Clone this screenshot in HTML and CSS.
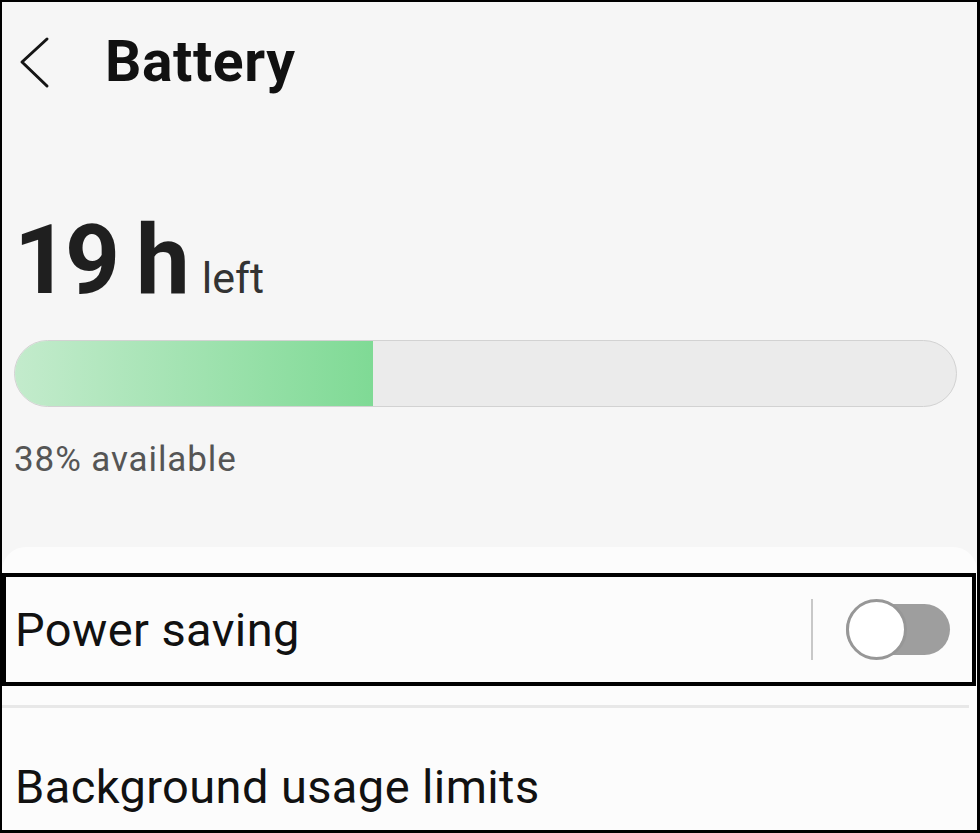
FILE: index.html
```html
<!DOCTYPE html>
<html lang="en">
<head>
    <meta charset="UTF-8" />
    <meta name="viewport" content="width=device-width, initial-scale=1.0" />
    <title>Battery</title>
    <link rel="stylesheet" href="styles.css">
</head>
<body>
    <div class="pantalla">
        <header class="cabecera">
            <svg class="volver" width="32" height="54" viewBox="0 0 32 54">
                <polyline points="28,3 3,26 28,50" fill="none" stroke="#151515" stroke-width="3" stroke-linecap="round" stroke-linejoin="round" />
            </svg>
            <h1>Battery</h1>
        </header>

        <section class="resumen">
            <p class="tiempo"><span class="horas">19 h</span><span class="resto">left</span></p>
            <div class="barra">
                <div class="barra-nivel" style="width: 38%"></div>
            </div>
            <p class="disponible">38% available</p>
        </section>

        <section class="tarjeta">
            <div class="fila fila-marcada">
                <span class="fila-texto">Power saving</span>
                <div class="fila-control">
                    <span class="separador"></span>
                    <span class="interruptor"><span class="perilla"></span></span>
                </div>
            </div>
            <hr class="linea">
            <div class="fila fila-ultima">
                <span class="fila-texto">Background usage limits</span>
            </div>
        </section>
    </div>
</body>
</html>
```

FILE: styles.css
```css
* {
    margin: 0;
    padding: 0;
    box-sizing: border-box;
}

body {
    font-family: Roboto, 'Noto Sans', sans-serif;
    background: #ffffff;
}

.pantalla {
    width: 980px;
    height: 833px;
    border-style: solid;
    border-color: #000;
    border-width: 2px 3px 3px 2px;
    background-color: #f6f6f6;
    overflow: hidden;
    display: flex;
    flex-direction: column;
}

.cabecera {
    height: 122px;
    display: flex;
    align-items: center;
    padding-left: 17px;
}

.volver {
    display: block;
}

.cabecera h1 {
    margin-left: 54px;
    margin-top: -3px;
    font-size: 57px;
    font-weight: 700;
    letter-spacing: 0.6px;
    color: #111;
    line-height: 1;
}

.resumen {
    padding: 0 20px 0 12px;
}

.tiempo {
    margin-top: 88px;
    line-height: 1;
    color: #1f1f1f;
    white-space: nowrap;
}

.horas {
    font-size: 96px;
    font-weight: 700;
    letter-spacing: -4px;
}

.resto {
    font-size: 43px;
    color: #333;
    margin-left: 16px;
}

.barra {
    margin-top: 32px;
    height: 67px;
    border: 1px solid #d2d2d2;
    border-radius: 34px;
    background-color: #ebebeb;
    overflow: hidden;
}

.barra-nivel {
    height: 100%;
    background: linear-gradient(to right, #c3ebcc, #7fda95);
}

.disponible {
    margin-top: 35px;
    font-size: 35px;
    letter-spacing: 0.9px;
    line-height: 1;
    color: #555;
}

.tarjeta {
    margin-top: 70px;
    flex: 1;
    background-color: #fcfcfc;
    border-radius: 24px 24px 0 0;
    padding-top: 26px;
}

.fila {
    display: flex;
    align-items: center;
    justify-content: space-between;
}

.fila-texto {
    font-size: 47px;
    letter-spacing: 0.4px;
    color: #111;
    line-height: 1;
}

.fila-marcada {
    height: 113px;
    border: 4px solid #000;
    margin-right: 1px;
    padding: 0 22px 0 9px;
}

.fila-control {
    display: flex;
    align-items: center;
}

.separador {
    width: 2px;
    height: 61px;
    background-color: #c8c8c8;
    margin-right: 33px;
}

.interruptor {
    position: relative;
    width: 104px;
    height: 51px;
    border-radius: 26px;
    background-color: #9e9e9e;
}

.perilla {
    position: absolute;
    left: 0;
    top: -5px;
    width: 61px;
    height: 61px;
    border-radius: 50%;
    background-color: #fff;
    border: 3px solid #979797;
}

.linea {
    border: none;
    height: 3px;
    background-color: #e8e8e8;
    margin: 19px 8px 0 0;
}

.fila-ultima {
    padding: 55px 0 0 13px;
}
```
